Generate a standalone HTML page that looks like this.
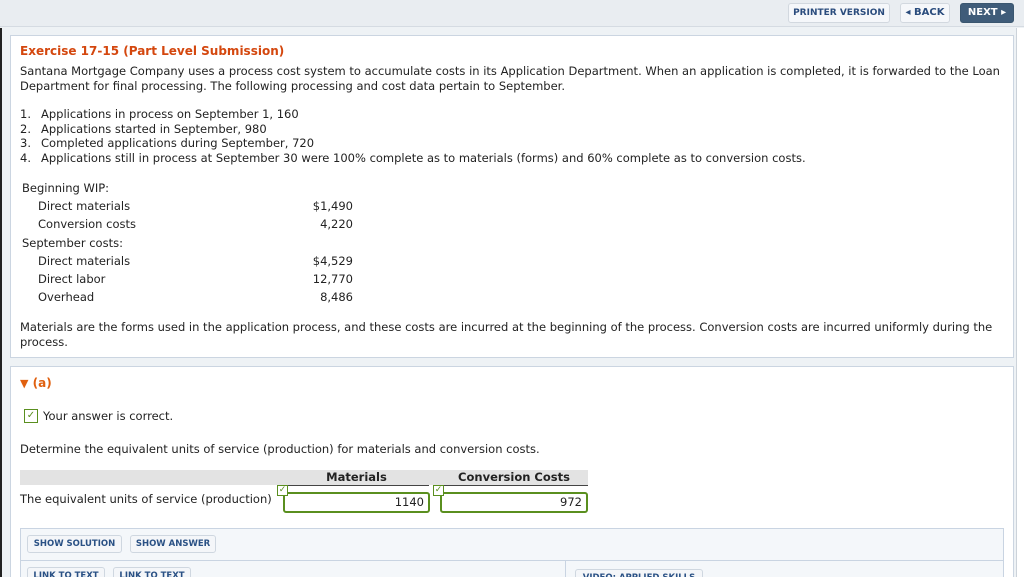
<!DOCTYPE html>
<html><head><style>
*{margin:0;padding:0;box-sizing:border-box}
html,body{width:1024px;height:577px;overflow:hidden}
body{background:#eef2f5;font-family:"DejaVu Sans","Liberation Sans",sans-serif;font-size:11.5px;color:#222;position:relative}
.a{position:absolute;white-space:nowrap}
.top{position:absolute;left:0;top:0;width:1024px;height:27px;background:#e9edf1;border-bottom:1px solid #d5dbe2}
.btn{position:absolute;border:1px solid #d2d8df;border-radius:3px;background:#f5f7fa;color:#2a4c7d;font-weight:bold;font-size:9px;text-align:center}
.box{position:absolute;background:#fff;border:1px solid #cbd5e1}
.sb{position:absolute;border:1px solid #cfd7e0;border-radius:3px;background:#f4f6f9;color:#2a5185;font-weight:bold;font-size:8.5px;text-align:center;line-height:16px}
.inp{position:absolute;border:2px solid #5a8f1f;border-radius:3px;background:#fff;text-align:right;padding-right:4px;line-height:17px;height:21px}
.ck{position:absolute;width:11px;height:11px;border:1px solid #5a8f1f;background:#fff;color:#5a8f1f;font-size:9px;line-height:9px;text-align:center}
</style></head><body>
<div style="position:absolute;left:0;top:28px;width:2px;height:549px;background:#222"></div>
<div class="top"></div>
<div class="btn" style="left:788px;top:3px;width:102px;height:20px;line-height:18px">PRINTER VERSION</div>
<div class="btn" style="left:900px;top:3px;width:50px;height:20px;line-height:18px;font-size:10px">◂ BACK</div>
<div class="btn" style="left:960px;top:3px;width:54px;height:20px;line-height:18px;font-size:10px;background:#3f5c79;color:#fff;border-color:#3a566f">NEXT ▸</div>
<div style="position:absolute;left:1016px;top:28px;width:8px;height:549px;background:#fff;border-left:1px solid #ccd3da"></div>

<div class="box" style="left:10px;top:35px;width:1004px;height:323px"></div>
<div class="a" style="left:20px;top:44px;color:#d4470e;font-weight:bold;font-size:12px">Exercise 17-15 (Part Level Submission)</div>
<div class="a" style="left:20px;top:64px;line-height:14.5px">Santana Mortgage Company uses a process cost system to accumulate costs in its Application Department. When an application is completed, it is forwarded to the Loan<br>Department for final processing. The following processing and cost data pertain to September.</div>
<div class="a" style="left:20px;top:107px;line-height:14.5px">1.<br>2.<br>3.<br>4.</div>
<div class="a" style="left:41px;top:107px;line-height:14.5px">Applications in process on September 1, 160<br>Applications started in September, 980<br>Completed applications during September, 720<br>Applications still in process at September 30 were 100% complete as to materials (forms) and 60% complete as to conversion costs.</div>
<div class="a" style="left:22px;top:179px;line-height:18.2px">Beginning WIP:<br><span style="padding-left:16px">Direct materials</span><br><span style="padding-left:16px">Conversion costs</span><br>September costs:<br><span style="padding-left:16px">Direct materials</span><br><span style="padding-left:16px">Direct labor</span><br><span style="padding-left:16px">Overhead</span></div>
<div class="a" style="left:283px;width:70px;top:197px;line-height:18.2px;text-align:right">$1,490<br>4,220<br>&nbsp;<br>$4,529<br>12,770<br>8,486</div>
<div class="a" style="left:20px;top:320px;line-height:14.5px">Materials are the forms used in the application process, and these costs are incurred at the beginning of the process. Conversion costs are incurred uniformly during the<br>process.</div>

<div class="box" style="left:10px;top:366px;width:1004px;height:215px"></div>
<div class="a" style="left:20px;top:376px;color:#e0600f;font-weight:bold;font-size:12px"><span style="font-size:11px">▼</span> (a)</div>
<div class="ck" style="left:24px;top:409px;width:14px;height:14px;line-height:12px;font-size:10px">✓</div>
<div class="a" style="left:43px;top:409px">Your answer is correct.</div>
<div class="a" style="left:20px;top:442px">Determine the equivalent units of service (production) for materials and conversion costs.</div>
<div style="position:absolute;left:20px;top:470px;width:568px;height:15px;background:#e3e3e3"></div>
<div class="a" style="left:284px;top:470px;width:145px;text-align:center;font-weight:bold;line-height:15px;border-bottom:1px solid #444">Materials</div>
<div class="a" style="left:440px;top:470px;width:148px;text-align:center;font-weight:bold;line-height:15px;border-bottom:1px solid #444">Conversion Costs</div>
<div class="a" style="left:20px;top:492px">The equivalent units of service (production)</div>
<div class="inp" style="left:283px;top:492px;width:147px">1140</div>
<div class="inp" style="left:440px;top:492px;width:148px">972</div>
<div class="ck" style="left:277px;top:485px">✓</div>
<div class="ck" style="left:433px;top:485px">✓</div>

<div style="position:absolute;left:20px;top:528px;width:984px;height:60px;background:#f4f7fa;border:1px solid #c9d4e2"></div>
<div style="position:absolute;left:20px;top:560px;width:984px;height:1px;background:#c9d4e2"></div>
<div style="position:absolute;left:565px;top:560px;width:1px;height:20px;background:#c9d4e2"></div>
<div class="sb" style="left:27px;top:535px;width:95px">SHOW SOLUTION</div>
<div class="sb" style="left:130px;top:535px;width:86px">SHOW ANSWER</div>
<div class="sb" style="left:27px;top:567px;width:78px">LINK TO TEXT</div>
<div class="sb" style="left:113px;top:567px;width:78px">LINK TO TEXT</div>
<div class="sb" style="left:575px;top:569px;width:128px">VIDEO: APPLIED SKILLS</div>
</body></html>
